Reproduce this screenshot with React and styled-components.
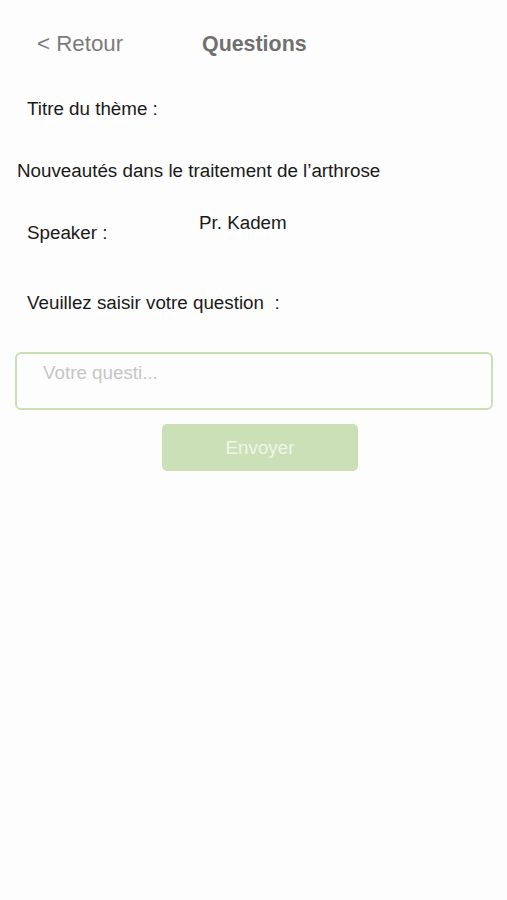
import React from "react";
import styled, { createGlobalStyle } from "styled-components";

const GlobalStyle = createGlobalStyle`
  body {
    margin: 0;
    background: #fdfdfd;
    font-family: "Liberation Sans", Arial, sans-serif;
  }
`;

const Screen = styled.div`
  width: 507px;
  height: 900px;
  background: #fdfdfd;
  box-sizing: border-box;
  padding-top: 31px;
  display: flex;
  flex-direction: column;
`;

const Header = styled.div`
  display: flex;
  align-items: center;
  height: 26px;
  padding-left: 37px;
`;

const Back = styled.div`
  font-size: 22.3px;
  color: #7b7b7b;
  width: 165px;
`;

const Title = styled.div`
  font-size: 21.4px;
  font-weight: bold;
  color: #707070;
`;

const Label = styled.div`
  font-size: 18.8px;
  color: #1a1a1a;
  padding-left: ${(p) => p.$indent || 27}px;
  margin-top: ${(p) => p.$top || 0}px;
  line-height: 20px;
`;

const SpeakerRow = styled.div`
  display: flex;
  margin-top: 32px;
  padding-left: 27px;
`;

const SpeakerLabel = styled.div`
  font-size: 18.8px;
  color: #1a1a1a;
  width: 172px;
  line-height: 20px;
  padding-top: 10px;
`;

const SpeakerName = styled.div`
  font-size: 18.8px;
  color: #1a1a1a;
  line-height: 20px;
`;

const Input = styled.div`
  margin: 39px 14px 0 15px;
  height: 58px;
  box-sizing: border-box;
  border: 2px solid #c8e0b3;
  border-radius: 6px;
  padding: 9px 0 0 26px;
  font-size: 18.8px;
  color: #c6c6c6;
  line-height: 20px;
`;

const ButtonRow = styled.div`
  display: flex;
  justify-content: center;
  margin-top: 14px;
  padding-left: 13px;
`;

const Button = styled.div`
  width: 196px;
  height: 47px;
  border-radius: 5px;
  background: #cce0b7;
  color: #eef6e8;
  font-size: 18.8px;
  display: flex;
  align-items: center;
  justify-content: center;
`;

export default function App() {
  return (
    <>
      <GlobalStyle />
      <Screen>
        <Header>
          <Back>&lt; Retour</Back>
          <Title>Questions</Title>
        </Header>
        <Label $top={42}>Titre du thème :</Label>
        <Label $top={42} $indent={17}>
          Nouveautés dans le traitement de l’arthrose
        </Label>
        <SpeakerRow>
          <SpeakerLabel>Speaker :</SpeakerLabel>
          <SpeakerName>Pr. Kadem</SpeakerName>
        </SpeakerRow>
        <Label $top={50}>Veuillez saisir votre question&nbsp; :</Label>
        <Input>Votre questi...</Input>
        <ButtonRow>
          <Button>Envoyer</Button>
        </ButtonRow>
      </Screen>
    </>
  );
}
